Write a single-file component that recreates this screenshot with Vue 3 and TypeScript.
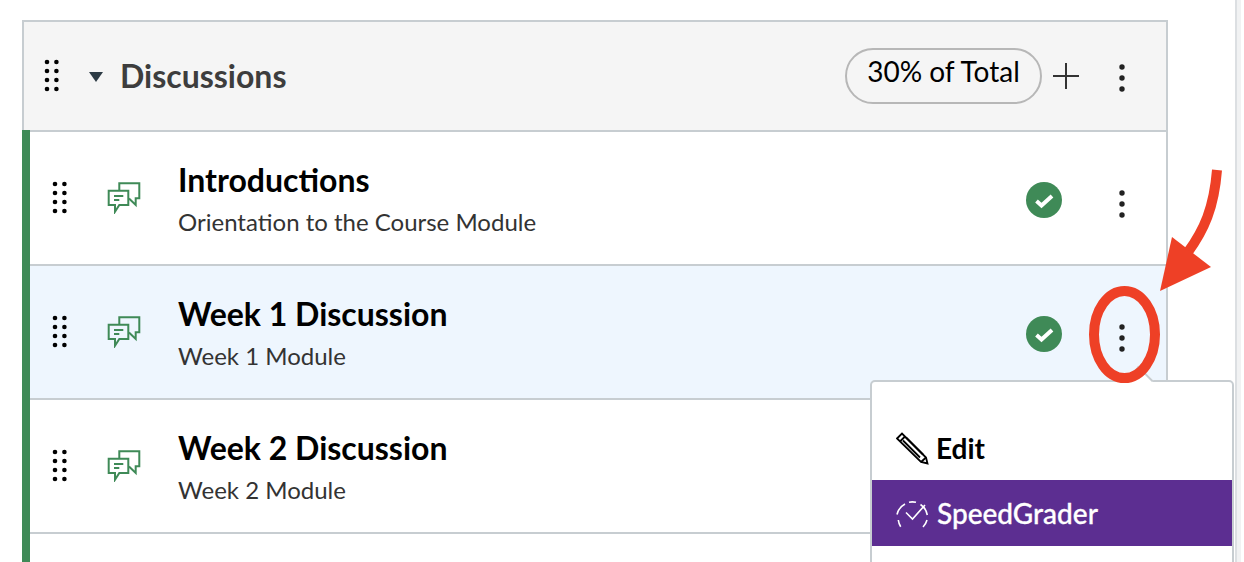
<script setup lang="ts">
type Row = { title: string; sub: string; published: boolean; active?: boolean };

const rows: Row[] = [
  { title: "Introductions", sub: "Orientation to the Course Module", published: true },
  { title: "Week 1 Discussion", sub: "Week 1 Module", published: true, active: true },
  { title: "Week 2 Discussion", sub: "Week 2 Module", published: false },
];

const gripDots = [4, 13, 22, 31].flatMap((cy) => [
  { cx: 4, cy },
  { cx: 13.4, cy },
]);
</script>

<template>
  <div class="page">
    <div class="sideline" />

    <section class="group">
      <header class="groupHeader">
        <svg class="grip headerGrip" width="18" height="36" viewBox="0 0 18 36">
          <circle v-for="d in gripDots" :key="`${d.cx}-${d.cy}`" :cx="d.cx" :cy="d.cy" r="2.3" />
        </svg>
        <svg class="caret" width="14" height="10" viewBox="0 0 14 10">
          <path d="M0 0h14L7 10z" />
        </svg>
        <h2 class="groupTitle">Discussions</h2>
        <span class="totalPill">30% of Total</span>
        <svg class="plus" width="26" height="26" viewBox="0 0 26 26">
          <path d="M13 0v26M0 13h26" />
        </svg>
        <svg class="kebab headerKebab" width="8" height="30" viewBox="0 0 8 30">
          <circle cx="4" cy="4" r="2.7" />
          <circle cx="4" cy="15" r="2.7" />
          <circle cx="4" cy="26" r="2.7" />
        </svg>
      </header>

      <ul class="rowList">
        <li v-for="row in rows" :key="row.title" class="row" :class="{ active: row.active }">
          <svg class="grip" width="18" height="36" viewBox="0 0 18 36">
            <circle v-for="d in gripDots" :key="`${d.cx}-${d.cy}`" :cx="d.cx" :cy="d.cy" r="2.3" />
          </svg>
          <svg class="discussionIcon" width="34" height="32" viewBox="0 0 34 32" fill="none">
            <path d="M12.300 8.700V1.300H32.300V16.300H28.700V23L22 16.500" />
            <path d="M1.700 8.700H21.300V23H12.300L8 29.700V23H1.700Z" />
            <path d="M7 14H16.300M7 18H12.300" />
          </svg>
          <div class="rowText">
            <div class="rowTitle">{{ row.title }}</div>
            <div class="rowSub">{{ row.sub }}</div>
          </div>
          <svg v-if="row.published" class="check" width="36" height="36" viewBox="0 0 36 36">
            <circle cx="18" cy="18" r="18" fill="#3f8a57" />
            <path d="M10.500 19l5 4.500L26 14" fill="none" stroke="#fff" stroke-width="4" />
          </svg>
          <svg class="kebab rowKebab" width="8" height="30" viewBox="0 0 8 30">
            <circle cx="4" cy="4" r="2.7" />
            <circle cx="4" cy="15" r="2.7" />
            <circle cx="4" cy="26" r="2.7" />
          </svg>
        </li>
        <li class="row lastRow" />
      </ul>
    </section>

    <div class="menu">
      <span class="menuTip" />
      <div class="menuItem editItem">
        <svg class="menuIcon" width="34" height="34" viewBox="0 0 34 34" fill="none" stroke="#000" stroke-width="1.800">
          <path d="M1 7.500L6 2.500l24 24 1.500 6-6.500-1.500z" />
          <path d="M4 10.500l5-5M7 9.500l17 17M10 6.500l17 17M25 31l5-4.500" />
        </svg>
        <span>Edit</span>
      </div>
      <div class="menuItem selected">
        <svg class="menuIcon" width="34" height="34" viewBox="0 0 34 34" fill="none" stroke="#fff" stroke-width="1.600">
          <path d="M4.700 30.700A15.800 15.800 0 0 1 2.300 24" />
          <path d="M1 18.500A15.800 15.800 0 0 1 9 8" />
          <path d="M13 6.200A15.800 15.800 0 0 1 20 6.300" />
          <path d="M24.500 8.500A15.800 15.800 0 0 1 31.300 19" />
          <path d="M31 24A15.800 15.800 0 0 1 27 31" />
          <path d="M10 16.500l6.500 6.500L29 9" />
        </svg>
        <span>SpeedGrader</span>
      </div>
    </div>

    <svg class="callout" width="140" height="230" viewBox="0 0 140 230" fill="none">
      <ellipse cx="36.500" cy="166.500" rx="30.500" ry="43.500" stroke="#ee4026" stroke-width="10" />
      <path d="M129 2C126 40 116 62 100 84" stroke="#ee4026" stroke-width="10" />
      <path d="M84 69L123 99 72 123z" fill="#ee4026" />
    </svg>
  </div>
</template>

<style>
html,
body {
  margin: 0;
  background: #fff;
}
</style>

<style scoped>
.page {
  position: relative;
  box-sizing: border-box;
  width: 1244px;
  height: 562px;
  padding: 20px 0 0 22px;
  overflow: hidden;
  font-family: Lato, "Liberation Sans", sans-serif;
  color: #000;
}

.sideline {
  position: absolute;
  top: 0;
  right: 3px;
  bottom: 0;
  width: 4px;
  background: #f1f2f3;
  border-left: 2px solid #dcdfe2;
}

.group {
  width: 1146px;
  box-sizing: border-box;
  border-top: 2px solid #c7cdd1;
  border-right: 2px solid #c7cdd1;
}

.groupHeader {
  display: flex;
  align-items: center;
  height: 108px;
  background: #f5f5f5;
  border-bottom: 2px solid #c7cdd1;
  border-left: 2px solid #c7cdd1;
  padding-left: 19px;
  padding-right: 40px;
}

.grip {
  flex: none;
  fill: #000;
}

.headerGrip {
  margin-right: 28px;
}

.caret {
  flex: none;
  margin: 2px 17px 0 0;
  fill: #2d3b45;
}

.groupTitle {
  margin: 0;
  flex: 1;
  font-size: 32px;
  font-weight: 700;
  line-height: 1;
  color: #3d3d3d;
}

.totalPill {
  box-sizing: border-box;
  height: 56px;
  width: 197px;
  border: 2px solid #b7b7b7;
  border-radius: 28px;
  text-align: center;
  font-size: 28px;
  line-height: 42px;
}

.plus {
  flex: none;
  margin: 0 39px 0 11px;
  fill: none;
  stroke: #333;
  stroke-width: 2;
}

.kebab {
  flex: none;
  fill: #222;
}

.headerKebab {
  margin-top: 4px;
}

.rowList {
  margin: -2px 0 0;
  padding: 0;
  list-style: none;
  border-left: 8px solid #3f8a57;
}

.row {
  display: flex;
  align-items: center;
  box-sizing: border-box;
  height: 134px;
  padding: 0 40px 0 21px;
  border-bottom: 2px solid #c7cdd1;
}

.row:first-child {
  height: 136px;
  padding-top: 2px;
}

.row.active {
  background: #eef6fe;
}

.lastRow {
  border-bottom: 0;
}

.discussionIcon {
  flex: none;
  margin: 0 37px 0 38px;
  stroke: #3f8a57;
  stroke-width: 2;
}

.rowText {
  flex: 1;
  padding-top: 3px;
}

.rowTitle {
  font-size: 32px;
  font-weight: 700;
  line-height: 36px;
}

.rowSub {
  margin-top: 9px;
  font-size: 24px;
  line-height: 30px;
  color: #333;
}

.check {
  flex: none;
  margin: 4px 56px 0 0;
}

.rowKebab {
  margin: 12px 0 0 auto;
}

.menu {
  position: absolute;
  top: 380px;
  left: 870px;
  width: 364px;
  height: 200px;
  box-sizing: border-box;
  padding-top: 33px;
  background: #fff;
  border: 2px solid #c7cdd1;
  border-radius: 5px;
}

.menuTip {
  position: absolute;
  top: -12px;
  left: 256px;
  width: 21px;
  height: 21px;
  box-sizing: border-box;
  background: #fff;
  border-top: 2px solid #c7cdd1;
  border-right: 2px solid #c7cdd1;
  transform: rotate(-45deg);
}

.menuItem {
  position: relative;
  display: flex;
  align-items: center;
  gap: 7px;
  height: 65px;
  padding-left: 24px;
  font-size: 28px;
  font-weight: 700;
}

.editItem {
  gap: 6px;
}

.menuItem.selected {
  height: 66px;
  background: #5c2e91;
  color: #fff;
  font-weight: 500;
  -webkit-text-stroke: 0.3px #fff;
}

.menuIcon {
  flex: none;
}

.callout {
  position: absolute;
  top: 168px;
  left: 1088px;
}
</style>
